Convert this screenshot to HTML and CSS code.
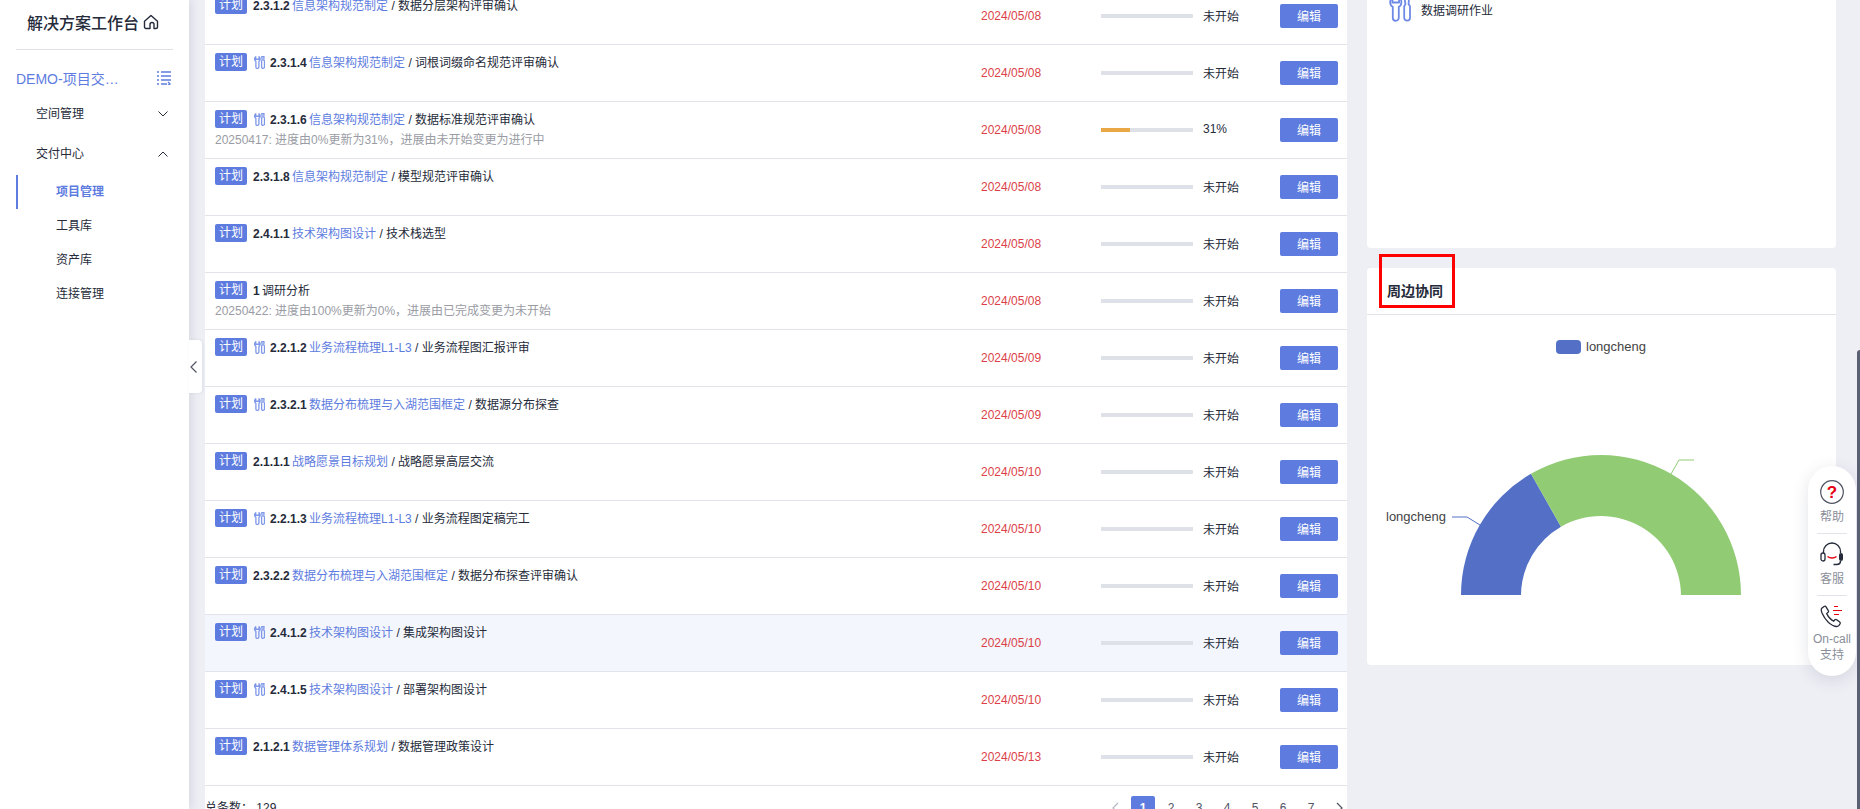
FILE: index.html
```html
<!DOCTYPE html>
<html lang="en">
<head>
    <meta charset="UTF-8">
    <meta name="viewport" content="width=device-width, initial-scale=1.0">
    <title>解决方案工作台</title>
    <link rel="stylesheet" href="styles.css">
</head>
<body>
    <svg class="defs" width="0" height="0">
        <symbol id="tool" viewBox="0 0 22 26">
            <path d="M3.5 1.5C2 2.6 1.2 4.3 1.2 6.2c0 2.1 1 3.7 2.6 4.6v11a3 3 0 0 0 6 0v-11c1.6-.9 2.6-2.5 2.6-4.6 0-1.900-.8-3.600-2.300-4.700v5H3.5z" fill="none" stroke="currentColor" stroke-linejoin="round"/>
            <path d="M15.5 1.200h4.500l-.4 7 1.400 2v11.600a2.900 2.900 0 0 1-5.800 0V10.200l1.200-2z" fill="none" stroke="currentColor" stroke-linejoin="round"/>
        </symbol>
    </svg>

    <div class="layout">
        <aside class="sidebar">
            <div class="brand">
                <span>解决方案工作台</span>
                <svg class="home-icon" viewBox="0 0 16 16"><path d="M1.5 7.2 8 1.5l6.5 5.700v5.800a1.500 1.500 0 0 1-1.500 1.500h-2V10.500a2 2 0 0 0-4 0v4H3A1.500 1.500 0 0 1 1.500 13z" fill="none" stroke="#252b3a" stroke-width="1.4" stroke-linejoin="round"/></svg>
            </div>
            <div class="project">
                <span class="project-name">DEMO-项目交…</span>
                <svg class="list-icon" viewBox="0 0 14 14"><path d="M0 1h2M4 1h10M0 5h2M4 5h10M0 9h2M4 9h10M0 13h2M4 13h6M11 11l2 2-2 1" fill="none" stroke="#5e7ce0" stroke-width="1.3"/></svg>
            </div>
            <div class="menu-item">
                <span>空间管理</span>
                <svg class="chevron" viewBox="0 0 10 6"><path d="M.5.5 5 5 9.5.5" fill="none" stroke="#252b3a" stroke-width="1"/></svg>
            </div>
            <div class="menu-item">
                <span>交付中心</span>
                <svg class="chevron" viewBox="0 0 10 6"><path d="M.5 5.500 5 1l4.500 4.500" fill="none" stroke="#252b3a" stroke-width="1"/></svg>
            </div>
            <div class="sub-item active">项目管理</div>
            <div class="sub-item">工具库</div>
            <div class="sub-item">资产库</div>
            <div class="sub-item">连接管理</div>
        </aside>

        <div class="collapse-btn">
            <svg viewBox="0 0 7 12"><path d="M6.5.5 1 6l5.500 5.500" fill="none" stroke="#4f5363" stroke-width="1.2"/></svg>
        </div>

        <main class="main">
            <section class="table-panel">
                <div class="row">
                    <div class="title-cell"><div class="title-line"><span class="tag">计划</span><b>2.3.1.2</b> <a>信息架构规范制定</a> / 数据分层架构评审确认</div></div>
                    <div class="date">2024/05/08</div>
                    <div class="progress"><div class="bar"></div><span>未开始</span></div>
                    <button class="edit">编辑</button>
                </div>
                <div class="row">
                    <div class="title-cell"><div class="title-line"><span class="tag">计划</span><svg class="tool-small"><use href="#tool"/></svg><b>2.3.1.4</b> <a>信息架构规范制定</a> / 词根词缀命名规范评审确认</div></div>
                    <div class="date">2024/05/08</div>
                    <div class="progress"><div class="bar"></div><span>未开始</span></div>
                    <button class="edit">编辑</button>
                </div>
                <div class="row">
                    <div class="title-cell">
                        <div class="title-line"><span class="tag">计划</span><svg class="tool-small"><use href="#tool"/></svg><b>2.3.1.6</b> <a>信息架构规范制定</a> / 数据标准规范评审确认</div>
                        <p class="note">20250417: 进度由0%更新为31%，进展由未开始变更为进行中</p>
                    </div>
                    <div class="date">2024/05/08</div>
                    <div class="progress"><div class="bar"><div class="bar-fill" style="width: 31%"></div></div><span>31%</span></div>
                    <button class="edit">编辑</button>
                </div>
                <div class="row">
                    <div class="title-cell"><div class="title-line"><span class="tag">计划</span><b>2.3.1.8</b> <a>信息架构规范制定</a> / 模型规范评审确认</div></div>
                    <div class="date">2024/05/08</div>
                    <div class="progress"><div class="bar"></div><span>未开始</span></div>
                    <button class="edit">编辑</button>
                </div>
                <div class="row">
                    <div class="title-cell"><div class="title-line"><span class="tag">计划</span><b>2.4.1.1</b> <a>技术架构图设计</a> / 技术栈选型</div></div>
                    <div class="date">2024/05/08</div>
                    <div class="progress"><div class="bar"></div><span>未开始</span></div>
                    <button class="edit">编辑</button>
                </div>
                <div class="row">
                    <div class="title-cell">
                        <div class="title-line"><span class="tag">计划</span><b>1</b> 调研分析</div>
                        <p class="note">20250422: 进度由100%更新为0%，进展由已完成变更为未开始</p>
                    </div>
                    <div class="date">2024/05/08</div>
                    <div class="progress"><div class="bar"></div><span>未开始</span></div>
                    <button class="edit">编辑</button>
                </div>
                <div class="row">
                    <div class="title-cell"><div class="title-line"><span class="tag">计划</span><svg class="tool-small"><use href="#tool"/></svg><b>2.2.1.2</b> <a>业务流程梳理L1-L3</a> / 业务流程图汇报评审</div></div>
                    <div class="date">2024/05/09</div>
                    <div class="progress"><div class="bar"></div><span>未开始</span></div>
                    <button class="edit">编辑</button>
                </div>
                <div class="row">
                    <div class="title-cell"><div class="title-line"><span class="tag">计划</span><svg class="tool-small"><use href="#tool"/></svg><b>2.3.2.1</b> <a>数据分布梳理与入湖范围框定</a> / 数据源分布探查</div></div>
                    <div class="date">2024/05/09</div>
                    <div class="progress"><div class="bar"></div><span>未开始</span></div>
                    <button class="edit">编辑</button>
                </div>
                <div class="row">
                    <div class="title-cell"><div class="title-line"><span class="tag">计划</span><b>2.1.1.1</b> <a>战略愿景目标规划</a> / 战略愿景高层交流</div></div>
                    <div class="date">2024/05/10</div>
                    <div class="progress"><div class="bar"></div><span>未开始</span></div>
                    <button class="edit">编辑</button>
                </div>
                <div class="row">
                    <div class="title-cell"><div class="title-line"><span class="tag">计划</span><svg class="tool-small"><use href="#tool"/></svg><b>2.2.1.3</b> <a>业务流程梳理L1-L3</a> / 业务流程图定稿完工</div></div>
                    <div class="date">2024/05/10</div>
                    <div class="progress"><div class="bar"></div><span>未开始</span></div>
                    <button class="edit">编辑</button>
                </div>
                <div class="row">
                    <div class="title-cell"><div class="title-line"><span class="tag">计划</span><b>2.3.2.2</b> <a>数据分布梳理与入湖范围框定</a> / 数据分布探查评审确认</div></div>
                    <div class="date">2024/05/10</div>
                    <div class="progress"><div class="bar"></div><span>未开始</span></div>
                    <button class="edit">编辑</button>
                </div>
                <div class="row hover">
                    <div class="title-cell"><div class="title-line"><span class="tag">计划</span><svg class="tool-small"><use href="#tool"/></svg><b>2.4.1.2</b> <a>技术架构图设计</a> / 集成架构图设计</div></div>
                    <div class="date">2024/05/10</div>
                    <div class="progress"><div class="bar"></div><span>未开始</span></div>
                    <button class="edit">编辑</button>
                </div>
                <div class="row">
                    <div class="title-cell"><div class="title-line"><span class="tag">计划</span><svg class="tool-small"><use href="#tool"/></svg><b>2.4.1.5</b> <a>技术架构图设计</a> / 部署架构图设计</div></div>
                    <div class="date">2024/05/10</div>
                    <div class="progress"><div class="bar"></div><span>未开始</span></div>
                    <button class="edit">编辑</button>
                </div>
                <div class="row">
                    <div class="title-cell"><div class="title-line"><span class="tag">计划</span><b>2.1.2.1</b> <a>数据管理体系规划</a> / 数据管理政策设计</div></div>
                    <div class="date">2024/05/13</div>
                    <div class="progress"><div class="bar"></div><span>未开始</span></div>
                    <button class="edit">编辑</button>
                </div>
                <div class="pager">
                    <span class="total">总条数： 129</span>
                    <div class="pages">
                        <span class="page"><svg class="page-arrow" viewBox="0 0 7 12"><path d="M6 1 1 6l5 5" fill="none" stroke="#b5b8c2" stroke-width="1.2"/></svg></span>
                        <span class="page current">1</span>
                        <span class="page">2</span>
                        <span class="page">3</span>
                        <span class="page">4</span>
                        <span class="page">5</span>
                        <span class="page">6</span>
                        <span class="page">7</span>
                        <span class="page"><svg class="page-arrow" viewBox="0 0 7 12"><path d="M1 1l5 5-5 5" fill="none" stroke="#4f5363" stroke-width="1.2"/></svg></span>
                    </div>
                </div>
            </section>

            <div class="side-col">
                <section class="panel work-panel">
                    <div class="work-item">
                        <svg class="tool-big"><use href="#tool"/></svg>
                        <span>数据调研作业</span>
                    </div>
                </section>
                <section class="panel chart-panel">
                    <h3 class="panel-title">周边协同</h3>
                    <svg class="chart" viewBox="0 0 469 350">
                        <rect x="189" y="25" width="25" height="14" rx="4" fill="#5470c6"/>
                        <text x="219" y="36" class="chart-label">longcheng</text>
                        <path d="M94 280A140 140 0 0 1 164 158.76L194 211.72A80 80 0 0 0 154 280Z" fill="#5470c6"/>
                        <path d="M164 158.76A140 140 0 0 1 374 280H314A80 80 0 0 0 194 211.72Z" fill="#91cc75"/>
                        <path d="M85 202H100L113 210" fill="none" stroke="#5470c6"/>
                        <path d="M304 159L312 145H327" fill="none" stroke="#91cc75"/>
                        <text x="19" y="206" class="chart-label">longcheng</text>
                    </svg>
                </section>
            </div>
        </main>
    </div>

    <div class="mark-box"></div>

    <div class="float-bar">
        <div class="float-item">
            <svg class="float-icon" viewBox="0 0 24 24">
                <circle cx="12" cy="12" r="11.300" fill="none" stroke="#4f5363" stroke-width="1.2"/>
                <text x="12" y="18" class="help-mark">?</text>
            </svg>
            <span>帮助</span>
        </div>
        <div class="float-item">
            <svg class="float-icon" viewBox="0 0 24 24">
                <path d="M3.5 11V9.500a8.500 8.500 0 0 1 17 0V11" fill="none" stroke="#252b3a" stroke-width="1.3"/>
                <rect x="1" y="11" width="4" height="8" rx="2" fill="none" stroke="#252b3a" stroke-width="1.3"/>
                <rect x="19" y="11" width="4" height="8" rx="2" fill="#252b3a"/>
                <path d="M7.5 14.500c2.500 2 6.500 2 9 0" fill="none" stroke="#e60012" stroke-width="1.5"/>
                <path d="M20.5 19c0 2.500-2 3.500-4 3.500h-3" fill="none" stroke="#252b3a" stroke-width="1.5"/>
            </svg>
            <span>客服</span>
        </div>
        <div class="float-item">
            <svg class="float-icon" viewBox="0 0 24 24">
                <path d="M4 2.500 1.800 4.200C1 5 1 6.500 2 9c1.500 3.500 3.500 6.500 6.500 9.500 3 2.500 6 4 8 4 1.200 0 2-.5 2.500-1.200l1-1.500c.4-.7.3-1.300-.3-1.800l-3-2.300c-.7-.5-1.300-.4-1.800.1l-1.200 1.300c-3-1.500-5.500-4.500-7-7.500l1.400-1.300c.5-.5.6-1.100.2-1.700L6 2.800C5.500 2 4.700 2 4 2.500z" fill="none" stroke="#252b3a" stroke-width="1.3"/>
                <path d="M14 2.500h4M13 6.500h9M14 10.500h5" fill="none" stroke="#e60012" stroke-width="1.2"/>
            </svg>
            <span>On-call<br>支持</span>
        </div>
    </div>

    <div class="scroll-thumb"></div>
</body>
</html>
```

FILE: styles.css
```css
*{
    margin: 0;
    padding: 0;
    box-sizing: border-box;
    font-family: "Liberation Sans", "Noto Sans CJK SC", sans-serif;
}

html, body{
    height: 809px;
    overflow: hidden;
}

body{
    background: #eeeff5;
    color: #252b3a;
    font-size: 12px;
}

.defs{
    position: absolute;
}

.layout{
    display: flex;
    height: 809px;
}

/* left menu */
.sidebar{
    width: 189px;
    flex: none;
    background: #fff;
    padding: 0 16px;
    box-shadow: 3px 0 8px rgba(60, 65, 100, 0.12);
    position: relative;
}

.brand{
    height: 50px;
    border-bottom: 1px solid #dfe1e6;
    padding: 0 0 6px 11px;
    display: flex;
    align-items: center;
    gap: 4px;
    font-size: 16px;
    font-weight: 500;
}

.home-icon{
    width: 16px;
    height: 16px;
}

.project{
    margin-top: 14px;
    height: 28px;
    display: flex;
    align-items: center;
    justify-content: space-between;
    color: #5e7ce0;
    font-size: 14px;
}

.list-icon{
    width: 14px;
    height: 14px;
    margin-right: 2px;
}

.menu-item{
    height: 40px;
    padding: 0 5px 0 20px;
    display: flex;
    align-items: center;
    justify-content: space-between;
}

.chevron{
    width: 10px;
    height: 6px;
    margin-top: 3px;
}

.sub-item{
    height: 34px;
    line-height: 34px;
    padding-left: 40px;
}

.sub-item.active{
    margin-top: 3px;
    color: #5e7ce0;
    font-weight: 700;
    border-left: 2px solid #5e7ce0;
    padding-left: 38px;
}

.collapse-btn{
    position: absolute;
    left: 189px;
    top: 340px;
    width: 13px;
    height: 53px;
    background: #fff;
    border-radius: 0 4px 4px 0;
    box-shadow: 1px 0 3px rgba(60, 65, 100, 0.1);
    display: flex;
    align-items: center;
    padding-left: 1px;
}

.collapse-btn svg{
    width: 7px;
    height: 12px;
}

/* the page is scrolled a little, so everything starts above the window */
.main{
    margin-top: -12px;
    padding-left: 16px;
    display: flex;
    gap: 20px;
    align-items: flex-start;
}

.table-panel{
    width: 1142px;
    flex: none;
    background: #fff;
}

.row{
    height: 57px;
    border-bottom: 1px solid #e3e4ea;
    padding-left: 10px;
    display: grid;
    grid-template-columns: 766px 120px 179px 58px;
    align-items: center;
}

.row.hover{
    background: #f3f6fc;
}

.title-cell{
    align-self: start;
    padding-top: 8px;
}

.title-line{
    height: 18px;
    line-height: 20px;
    white-space: pre;
}

.title-line b{
    margin-right: -1px;
}

.tag{
    display: inline-block;
    vertical-align: top;
    width: 32px;
    height: 18px;
    line-height: 18px;
    margin-right: 6px;
    background: #5e7ce0;
    border-radius: 2px;
    color: #fff;
    text-align: center;
}

.title-line a{
    color: #5e7ce0;
}

.tool-small{
    vertical-align: top;
    width: 11px;
    height: 13px;
    margin: 3px 5px 0 1px;
    color: #7f97e8;
    stroke-width: 2.6;
}

.note{
    margin-top: 3px;
    line-height: 18px;
    color: #9a9ca5;
}

.date{
    color: #db3f48;
}

.progress{
    display: flex;
    align-items: center;
    gap: 10px;
}

.progress span{
    margin-bottom: 2px;
}

.bar{
    width: 92px;
    height: 4px;
    background: #dfe1e8;
}

.bar-fill{
    height: 4px;
    background: #eaa745;
}

.edit{
    width: 58px;
    height: 24px;
    border: 0;
    border-radius: 2px;
    padding-bottom: 2px;
    background: #5e7ce0;
    color: #fff;
    font-size: 12px;
}

.pager{
    height: 60px;
    padding-top: 10px;
    display: flex;
    align-items: flex-start;
    justify-content: space-between;
}

.total{
    line-height: 24px;
}

.pages{
    display: flex;
    gap: 4px;
    margin-right: -4px;
}

.page{
    width: 24px;
    height: 24px;
    line-height: 24px;
    text-align: center;
    border-radius: 2px;
    color: #4f5363;
}

.page.current{
    background: #5e7ce0;
    color: #fff;
    font-weight: 700;
}

.page-arrow{
    width: 7px;
    height: 12px;
    margin-top: 6px;
}

/* right column */
.side-col{
    width: 469px;
    flex: none;
    display: flex;
    flex-direction: column;
    gap: 20px;
}

.panel{
    background: #fff;
    border-radius: 4px;
}

.work-panel{
    height: 260px;
    padding: 8px 0 0 22px;
}

.work-item{
    display: flex;
    align-items: center;
    gap: 10px;
}

.tool-big{
    width: 22px;
    height: 26px;
    color: #6f8ae6;
    stroke-width: 1.8;
}

.chart-panel{
    height: 397px;
}

.panel-title{
    height: 47px;
    line-height: 46px;
    padding-left: 20px;
    border-bottom: 1px solid #e3e4ea;
    font-size: 14px;
    font-weight: 700;
}

.chart{
    display: block;
    width: 469px;
    height: 350px;
}

.chart-label{
    font-size: 13px;
    fill: #444;
}

/* red frame someone drew on the screenshot */
.mark-box{
    position: absolute;
    left: 1379px;
    top: 254px;
    width: 76px;
    height: 54px;
    border: 3px solid #f00;
}

.float-bar{
    position: absolute;
    left: 1808px;
    top: 466px;
    width: 48px;
    height: 210px;
    padding-top: 14px;
    background: #fff;
    border-radius: 24px;
    box-shadow: 0 4px 16px rgba(60, 65, 100, 0.15);
    color: #8a8e99;
    text-align: center;
    line-height: 16px;
}

.float-item{
    display: flex;
    flex-direction: column;
    align-items: center;
    gap: 5px;
    margin: 0 9px 8px;
    padding-bottom: 8px;
    border-bottom: 1px solid #e3e4ea;
    white-space: nowrap;
}

.float-item:last-child{
    border-bottom: 0;
    gap: 3px;
}

.float-icon{
    width: 24px;
    height: 24px;
}

.help-mark{
    font-size: 17px;
    font-weight: 700;
    fill: #e60012;
    text-anchor: middle;
}

.scroll-thumb{
    position: absolute;
    left: 1857px;
    top: 350px;
    width: 3px;
    height: 459px;
    background: #5b5f73;
    border-radius: 3px 0 0 0;
}
```
